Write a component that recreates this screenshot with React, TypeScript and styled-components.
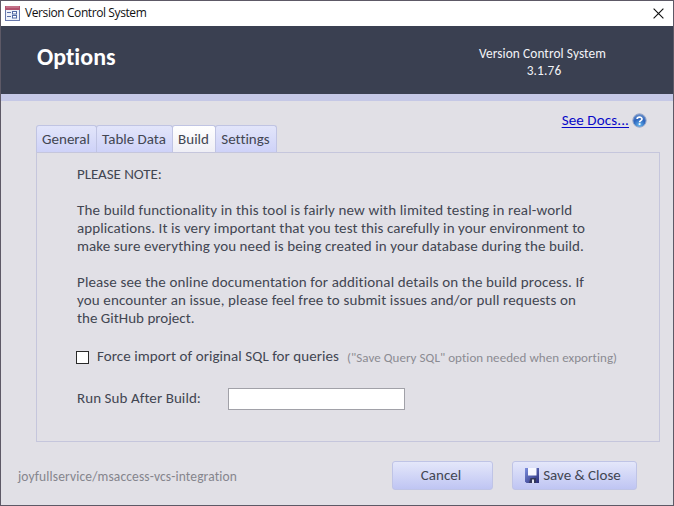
import React from "react";
import styled, { createGlobalStyle } from "styled-components";

const GlobalStyle = createGlobalStyle`
  * { box-sizing: border-box; }
  body { margin: 0; background: #e1e0e6; }
`;

const ink = "#424652";

const Window = styled.main`
  width: 674px;
  height: 506px;
  display: flex;
  flex-direction: column;
  border: 1px solid #5d5966;
  background: #e1e0e6;
  color: ${ink};
  font-family: Calibri, Carlito, "Noto Sans", sans-serif;
  font-size: 15px;
  font-variant-ligatures: none;
  line-height: 18px;
  overflow: hidden;
  white-space: nowrap;
`;

const TitleBar = styled.header`
  height: 25px;
  flex: none;
  display: flex;
  align-items: center;
  padding: 0 9px 0 3px;
  background: #fff;
  color: #111;
  font: 12px/16px "Open Sans", sans-serif;
  letter-spacing: -0.41px;
  svg { display: block; flex: none; }
`;

const Caption = styled.span`
  margin: -1px 0 0 4px;
  flex: 1;
`;

const Banner = styled.section`
  height: 75px;
  flex: none;
  display: flex;
  justify-content: space-between;
  padding: 19px 67px 0 36px;
  background: #3a4051;
  border-bottom: 7px solid #c5c8e6;
  color: #fff;
`;

const Heading = styled.h1`
  margin: 0;
  font-size: 24px;
  line-height: 24px;
  font-weight: 700;
  letter-spacing: 0;
`;

const Version = styled.div`
  text-align: center;
  font-size: 13.33px;
  line-height: 17px;
  letter-spacing: 0.1px;
  color: #f2f3f7;
`;

const VersionNumber = styled.div`
  margin-right: -3px;
  letter-spacing: 0.15px;
`;

const Body = styled.section`
  flex: 1;
  display: flex;
  flex-direction: column;
  padding: 10px 13px 0 16px;
`;

const TopRow = styled.div`
  height: 14px;
  flex: none;
  display: flex;
  align-items: flex-start;
  justify-content: flex-end;
  gap: 3px;
  padding-right: 13px;
  svg { display: block; margin-top: 2px; }
`;

const DocsLink = styled.a`
  color: #0808c8;
  letter-spacing: 0.13px;
  text-decoration: underline;
  text-decoration-thickness: 1px;
  text-underline-offset: 2px;
`;

const TabList = styled.nav`
  display: flex;
  height: 28px;
  flex: none;
  margin-left: 19px;
`;

const Tab = styled.button<{ $width: number; $active?: boolean }>`
  width: ${(p) => p.$width}px;
  height: ${(p) => (p.$active ? 28 : 27)}px;
  padding: ${(p) => (p.$active ? "0 1px 1px 0" : "0 1px 0 0")};
  border: 1px solid #c0c4e3;
  border-bottom: 0;
  border-radius: 3px 3px 0 0;
  background: ${(p) => (p.$active ? "linear-gradient(#fff, #eeeef5)" : "linear-gradient(#e2e5fa, #ced2f8)")};
  color: ${ink};
  font: inherit;
  font-variant-ligatures: none;
  line-height: 18px;
  & + & { margin-left: -1px; }
`;

const Panel = styled.section`
  height: 290px;
  flex: none;
  margin: -1px 0 0 19px;
  padding: 12px 0 0 40px;
  border: 1px solid #c5c6dc;
`;

const Copy = styled.p`
  margin: 0 0 18px;
`;

const Line = styled.span<{ $track: number }>`
  display: block;
  letter-spacing: ${(p) => p.$track}px;
`;

const CheckRow = styled.label`
  display: flex;
  align-items: center;
  height: 18px;
  margin-top: 20px;
`;

const Checkbox = styled.span`
  width: 13px;
  height: 13px;
  margin: 2px 8px 0 -1px;
  background: #fff;
  border: 1px solid #292929;
`;

const Label = styled.span`
  letter-spacing: 0.07px;
`;

const Hint = styled.span`
  margin: 3px 0 0 8px;
  color: #8b8b92;
  font-size: 13px;
  letter-spacing: 0.06px;
`;

const FieldRow = styled.div`
  display: flex;
  align-items: center;
  height: 22px;
  margin-top: 23px;
`;

const FieldLabel = styled.label`
  width: 151px;
  letter-spacing: 0.08px;
  margin-top: -3px;
`;

const Field = styled.input`
  width: 177px;
  height: 22px;
  padding: 0 4px;
  border: 1px solid #a1a1a8;
  border-radius: 0;
  background: #fff;
`;

const Footer = styled.footer`
  display: flex;
  align-items: center;
  height: 29px;
  margin-top: 19px;
  padding-right: 23px;
`;

const Repo = styled.span`
  flex: 1;
  margin: 3px 0 0 1px;
  color: #85858d;
  font-size: 13.5px;
  letter-spacing: 0.13px;
`;

const Button = styled.button<{ $width: number }>`
  width: ${(p) => p.$width}px;
  height: 29px;
  margin-left: 19px;
  padding: 0 3px 1px 0;
  display: flex;
  align-items: center;
  justify-content: center;
  gap: 4px;
  border: 1px solid #bfc4e6;
  border-radius: 3px;
  background: linear-gradient(#e4e7fa, #bfc5f3);
  color: ${ink};
  font: inherit;
`;

const FormIcon = () => (
  <svg width="17" height="16" viewBox="0 0 17 16">
    <rect x="1.5" y=".5" width="14" height="14" fill="#edf1fb" stroke="#6878ac" />
    <rect x="1" y="0" width="15" height="4" fill="#b3536f" />
    <path d="M2 1h13" stroke="#d491a4" />
    <path d="M3 6.5h4M3 10.5h4" stroke="#5b6fa7" />
    <rect x="8.5" y="5.5" width="4" height="2.5" fill="#fff" stroke="#5068a5" />
    <rect x="8.5" y="9.5" width="4" height="2.5" fill="#fff" stroke="#5068a5" />
  </svg>
);

const CloseIcon = () => (
  <svg width="11" height="11" viewBox="0 0 11 11">
    <path d="M.6.6l9.8 9.8M10.4.6L.6 10.4" stroke="#111" strokeWidth="1.15" fill="none" />
  </svg>
);

const HelpIcon = () => (
  <svg width="15" height="15" viewBox="0 0 15 15">
    <defs>
      <radialGradient id="help" cx=".5" cy=".85" r=".85">
        <stop offset="0" stopColor="#62b5ee" />
        <stop offset=".55" stopColor="#2c64bd" />
        <stop offset="1" stopColor="#6e93cc" />
      </radialGradient>
    </defs>
    <circle cx="7.5" cy="7.5" r="6.7" fill="url(#help)" stroke="#9aa9c8" />
    <path d="M5.1 6C5.2 3.6 10 3.5 10 6c0 1.7-2.4 1.6-2.4 3.2" fill="none" stroke="#fff" strokeWidth="1.7" />
    <rect x="6.7" y="10.2" width="1.8" height="1.7" fill="#fff" />
  </svg>
);

const SaveIcon = () => (
  <svg width="14" height="15" viewBox="0 0 14 15">
    <defs>
      <linearGradient id="disk" x2="1" y2="1">
        <stop offset="0" stopColor="#7b8ede" />
        <stop offset="1" stopColor="#292d78" />
      </linearGradient>
    </defs>
    <path d="M0 0h14v15H1.5L0 13.5z" fill="url(#disk)" />
    <path d="M3 0h8.5v7.5H3z" fill="#f7f8ff" />
    <path d="M4 15l1.5-5H11v5z" fill="#34385a" />
    <rect x="7" y="11.5" width="2" height="3.5" fill="#e3e6f1" />
  </svg>
);

export default function App() {
  return (
    <>
      <GlobalStyle />
      <Window>
        <TitleBar>
          <FormIcon />
          <Caption>Version Control System</Caption>
          <CloseIcon />
        </TitleBar>
        <Banner>
          <Heading>Options</Heading>
          <Version>
            <div>Version Control System</div>
            <VersionNumber>3.1.76</VersionNumber>
          </Version>
        </Banner>
        <Body>
          <TopRow>
            <DocsLink href="#">See Docs...</DocsLink>
            <HelpIcon />
          </TopRow>
          <TabList>
            <Tab $width={61}>General</Tab>
            <Tab $width={77}>Table Data</Tab>
            <Tab $width={44} $active>Build</Tab>
            <Tab $width={62}>Settings</Tab>
          </TabList>
          <Panel>
            <Copy><Line $track={-0.05}>PLEASE NOTE:</Line></Copy>
            <Copy>
              <Line $track={0.15}>The build functionality in this tool is fairly new with limited testing in real-world</Line>
              <Line $track={0.08}>applications. It is very important that you test this carefully in your environment to</Line>
              <Line $track={0.1}>make sure everything you need is being created in your database during the build.</Line>
            </Copy>
            <Copy>
              <Line $track={0.13}>Please see the online documentation for additional details on the build process. If</Line>
              <Line $track={0.13}>you encounter an issue, please feel free to submit issues and/or pull requests on</Line>
              <Line $track={0.02}>the GitHub project.</Line>
            </Copy>
            <CheckRow>
              <Checkbox role="checkbox" aria-checked="false" />
              <Label>Force import of original SQL for queries</Label>
              <Hint>("Save Query SQL" option needed when exporting)</Hint>
            </CheckRow>
            <FieldRow>
              <FieldLabel htmlFor="sub">Run Sub After Build:</FieldLabel>
              <Field id="sub" />
            </FieldRow>
          </Panel>
          <Footer>
            <Repo>joyfullservice/msaccess-vcs-integration</Repo>
            <Button $width={101}>Cancel</Button>
            <Button $width={125}><SaveIcon />Save &amp; Close</Button>
          </Footer>
        </Body>
      </Window>
    </>
  );
}
